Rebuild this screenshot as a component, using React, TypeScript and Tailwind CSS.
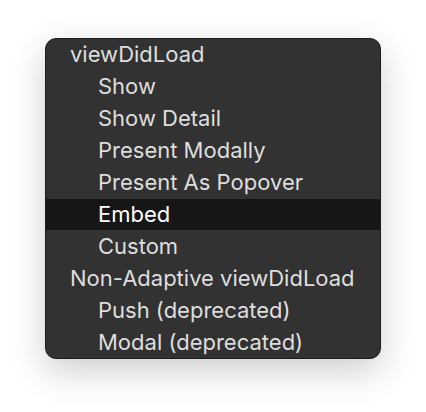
import type { ReactNode } from 'react'

type Item = { label: string; indent?: boolean; active?: boolean }

const items: Item[] = [
  { label: 'viewDidLoad' },
  { label: 'Show', indent: true },
  { label: 'Show Detail', indent: true },
  { label: 'Present Modally', indent: true },
  { label: 'Present As Popover', indent: true },
  { label: 'Embed', indent: true, active: true },
  { label: 'Custom', indent: true },
  { label: 'Non-Adaptive viewDidLoad' },
  { label: 'Push (deprecated)', indent: true },
  { label: 'Modal (deprecated)', indent: true },
]

function Row({ children, indent, active }: { children: ReactNode; indent?: boolean; active?: boolean }) {
  return (
    <div
      className={
        'h-8 flex items-center pb-px ' +
        (indent ? 'pl-[52px] ' : 'pl-[24px] ') +
        (active ? 'bg-[#161616] text-white' : 'text-[#dedede]')
      }
    >
      {children}
    </div>
  )
}

export default function App() {
  return (
    <div className="w-[426px] h-[412px] bg-white pl-[45px] pt-[38px]">
      <div
        className="w-[336px] h-[321px] rounded-[11px] bg-[#323232] border border-[#1c1c1c] overflow-hidden shadow-[0_12px_36px_rgba(0,0,0,0.2)] text-[22px] leading-none flex flex-col"
        style={{ fontFamily: 'Inter, "Liberation Sans", sans-serif' }}
      >
        {items.map((it) => (
          <Row key={it.label} indent={it.indent} active={it.active}>
            {it.label}
          </Row>
        ))}
      </div>
    </div>
  )
}
